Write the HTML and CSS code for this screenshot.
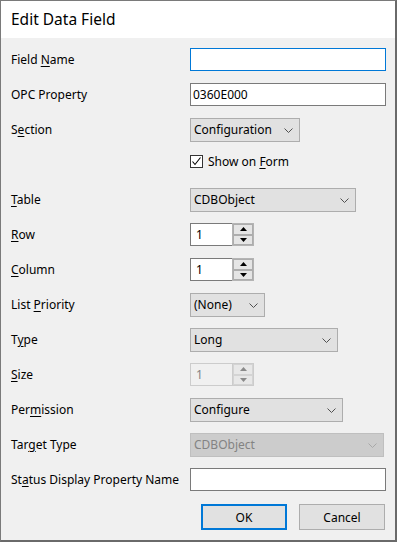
FILE: index.html
```html
<!DOCTYPE html>
<html>
<head>
<meta charset="utf-8">
<link rel="stylesheet" href="styles.css">
</head>
<body>
<div class="window">
  <div class="titlebar">Edit Data Field</div>
  <div class="content">
    <div class="row">
      <div class="label">Field <u>N</u>ame</div>
      <div class="textbox focus w196"></div>
    </div>
    <div class="row">
      <div class="label">OPC Property</div>
      <div class="textbox w196">0360E000</div>
    </div>
    <div class="row">
      <div class="label">S<u>e</u>ction</div>
      <div class="combo w110"><span>Configuration</span><svg class="chev" width="9" height="5" viewBox="0 0 9 5"><path d="M0.5 0.5L4.5 4.5L8.5 0.5"/></svg></div>
    </div>
    <div class="row cbrow">
      <div class="label"></div>
      <div class="checkwrap">
        <div class="checkbox"><svg width="11" height="11" viewBox="0 0 11 11"><path d="M1.5 5.5L4 8.5L9.5 1.5"/></svg></div>
        <span>Show on <u>F</u>orm</span>
      </div>
    </div>
    <div class="row">
      <div class="label"><u>T</u>able</div>
      <div class="combo w166"><span>CDBObject</span><svg class="chev" width="9" height="5" viewBox="0 0 9 5"><path d="M0.5 0.5L4.5 4.5L8.5 0.5"/></svg></div>
    </div>
    <div class="row">
      <div class="label"><u>R</u>ow</div>
      <div class="spin">
        <div class="spintext">1</div>
        <div class="spinbtns">
          <div class="sbtn"><svg width="7" height="4" viewBox="0 0 7 4"><path d="M0 4L3.5 0L7 4Z"/></svg></div>
          <div class="sbtn"><svg width="7" height="4" viewBox="0 0 7 4"><path d="M0 0L3.5 4L7 0Z"/></svg></div>
        </div>
      </div>
    </div>
    <div class="row">
      <div class="label"><u>C</u>olumn</div>
      <div class="spin">
        <div class="spintext">1</div>
        <div class="spinbtns">
          <div class="sbtn"><svg width="7" height="4" viewBox="0 0 7 4"><path d="M0 4L3.5 0L7 4Z"/></svg></div>
          <div class="sbtn"><svg width="7" height="4" viewBox="0 0 7 4"><path d="M0 0L3.5 4L7 0Z"/></svg></div>
        </div>
      </div>
    </div>
    <div class="row">
      <div class="label">List <u>P</u>riority</div>
      <div class="combo w75"><span>(None)</span><svg class="chev" width="9" height="5" viewBox="0 0 9 5"><path d="M0.5 0.5L4.5 4.5L8.5 0.5"/></svg></div>
    </div>
    <div class="row">
      <div class="label">T<u>y</u>pe</div>
      <div class="combo w148"><span>Long</span><svg class="chev" width="9" height="5" viewBox="0 0 9 5"><path d="M0.5 0.5L4.5 4.5L8.5 0.5"/></svg></div>
    </div>
    <div class="row">
      <div class="label"><u>S</u>ize</div>
      <div class="spin disabled">
        <div class="spintext">1</div>
        <div class="spinbtns">
          <div class="sbtn"><svg width="7" height="4" viewBox="0 0 7 4"><path d="M0 4L3.5 0L7 4Z"/></svg></div>
          <div class="sbtn"><svg width="7" height="4" viewBox="0 0 7 4"><path d="M0 0L3.5 4L7 0Z"/></svg></div>
        </div>
      </div>
    </div>
    <div class="row">
      <div class="label">Per<u>m</u>ission</div>
      <div class="combo w153"><span>Configure</span><svg class="chev" width="9" height="5" viewBox="0 0 9 5"><path d="M0.5 0.5L4.5 4.5L8.5 0.5"/></svg></div>
    </div>
    <div class="row">
      <div class="label">Tar<u>g</u>et Type</div>
      <div class="combo disabled w194"><span>CDBObject</span><svg class="chev" width="9" height="5" viewBox="0 0 9 5"><path d="M0.5 0.5L4.5 4.5L8.5 0.5"/></svg></div>
    </div>
    <div class="row">
      <div class="label">St<u>a</u>tus Display Property Name</div>
      <div class="textbox w196"></div>
    </div>
    <div class="buttons">
      <div class="btn default">OK</div>
      <div class="btn">Cancel</div>
    </div>
  </div>
</div>
</body>
</html>
```

FILE: styles.css
```css
html, body {
  margin: 0;
  padding: 0;
  background: #5a5a5a;
}
body {
  font-family: "Noto Sans", "Open Sans", sans-serif;
  font-size: 12px;
  color: #000;
}
.window {
  width: 397px;
  height: 542px;
  box-sizing: border-box;
  border: 1px solid #7a7a7a;
  border-right: 2px solid #6a6a6a;
  border-bottom: 2px solid #6a6a6a;
  background: #f0f0f0;
  display: flex;
  flex-direction: column;
}
.titlebar {
  height: 37px;
  background: #fff;
  font-size: 15.5px;
  line-height: 37px;
  padding-left: 10px;
  color: #000;
}
.content {
  padding: 10px 0 0 10px;
}
.row {
  display: flex;
  align-items: flex-start;
  height: 35px;
}
.label {
  width: 179px;
  flex: none;
  line-height: 23px;
  white-space: nowrap;
}
u {
  text-decoration: underline;
  text-underline-offset: 2px;
  text-decoration-thickness: 1px;
}
.textbox {
  height: 23px;
  box-sizing: border-box;
  background: #fff;
  border: 1px solid #7a7a7a;
  line-height: 21px;
  padding-left: 2px;
}
.textbox.focus {
  border-color: #0078d7;
}
.w196 { width: 196px; }
.w110 { width: 110px; }
.w166 { width: 166px; }
.w75 { width: 75px; }
.w148 { width: 148px; }
.w153 { width: 153px; }
.w194 { width: 194px; }
.combo {
  height: 24px;
  box-sizing: border-box;
  background: #e1e1e1;
  border: 1px solid #adadad;
  display: flex;
  align-items: center;
  justify-content: space-between;
  padding: 0 6px 0 3px;
}
.combo span {
  line-height: 22px;
}
.chev path {
  fill: none;
  stroke: #505050;
  stroke-width: 1;
}
.combo.disabled {
  background: #cccccc;
  border-color: #bfbfbf;
  color: #838383;
}
.combo.disabled .chev path {
  stroke: #a8a8a8;
}
.checkwrap {
  display: flex;
  align-items: center;
  height: 17px;
}
.checkwrap span {
  margin-left: 5px;
  line-height: 17px;
}
.checkbox {
  width: 13px;
  height: 13px;
  box-sizing: border-box;
  border: 1px solid #333;
  background: #fff;
  display: flex;
  align-items: center;
  justify-content: center;
}
.checkbox path {
  fill: none;
  stroke: #000;
  stroke-width: 1.1;
}
.spin {
  width: 64px;
  height: 23px;
  display: flex;
  box-sizing: border-box;
}
.spintext {
  width: 42px;
  box-sizing: border-box;
  background: #fff;
  border: 1px solid #7a7a7a;
  border-right: none;
  line-height: 21px;
  padding-left: 5px;
}
.spinbtns {
  width: 22px;
  box-sizing: border-box;
  border: 1px solid #b4b4b4;
  background: #fff;
  display: flex;
  flex-direction: column;
}
.sbtn {
  flex: 1;
  background: #e5e5e5;
  border: 1px solid #adadad;
  display: flex;
  align-items: center;
  justify-content: center;
}
.sbtn path {
  fill: #000;
}
.spin.disabled .spintext {
  background: #f0f0f0;
  border-color: #cccccc;
  color: #838383;
}
.spin.disabled .spinbtns {
  border-color: #cccccc;
  background: #f0f0f0;
}
.spin.disabled .sbtn {
  background: #e8e8e8;
  border-color: #d4d4d4;
}
.spin.disabled .sbtn path {
  fill: #8a8a8a;
}
.buttons {
  display: flex;
  gap: 12px;
  padding-left: 190px;
  margin-top: 1px;
}
.btn {
  width: 86px;
  height: 26px;
  box-sizing: border-box;
  background: #e1e1e1;
  border: 1px solid #adadad;
  display: flex;
  align-items: center;
  justify-content: center;
}
.btn.default {
  border: 2px solid #0078d7;
}
```
